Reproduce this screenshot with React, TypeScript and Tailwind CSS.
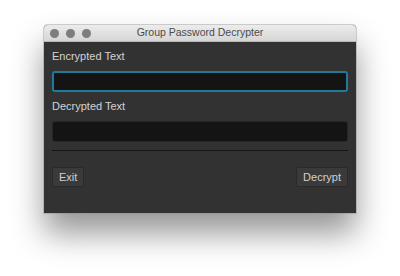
export default function App() {
  return (
    <div className="w-[400px] h-[276px] bg-white pt-[25px] pl-[44px] font-['Liberation_Sans',sans-serif]">
      <div className="w-[312px] h-[188px] flex flex-col rounded-t-[4px] overflow-hidden bg-[#323232] shadow-[0_20px_32px_rgba(0,0,0,0.42)] ring-1 ring-[#8a8a8a]/40">
        {/* Title bar */}
        <div className="relative h-[17px] shrink-0 bg-gradient-to-b from-[#ececec] to-[#d6d6d6] border-b border-[#b8b8b8] flex items-center">
          <div className="flex items-center gap-[7px] pl-[6px]">
            <span className="w-[9px] h-[9px] rounded-full bg-[#7d7d7d]" />
            <span className="w-[9px] h-[9px] rounded-full bg-[#7d7d7d]" />
            <span className="w-[9px] h-[9px] rounded-full bg-[#7d7d7d]" />
          </div>
          <div className="absolute inset-0 flex items-center justify-center text-[10.5px] text-[#4a4a4a]">
            Group Password Decrypter
          </div>
        </div>

        {/* Body */}
        <div className="flex flex-col px-[8px] pt-[7px] flex-1">
          <div className="text-[11px] leading-[14px] text-[#d2d2d2]">Encrypted Text</div>
          <div className="mt-[8px] h-[21px] rounded-[3px] bg-[#141414] border-2 border-[#23799a]" />
          <div className="mt-[7px] text-[11px] leading-[14px] text-[#d2d2d2]">Decrypted Text</div>
          <div className="mt-[8px] h-[21px] rounded-[3px] bg-[#141414] border border-[#262626]" />
          <div className="mt-[8px] h-[1px] bg-[#161616]" />
          <div className="mt-[16px] flex justify-between">
            <button className="h-[20px] px-[6px] rounded-[2px] bg-[#3a3a3a] border border-[#2a2a2a] text-[11px] text-[#d0d0d0]">
              Exit
            </button>
            <button className="h-[20px] px-[6px] rounded-[2px] bg-[#3a3a3a] border border-[#2a2a2a] text-[11px] text-[#d0d0d0]">
              Decrypt
            </button>
          </div>
        </div>
      </div>
    </div>
  );
}
